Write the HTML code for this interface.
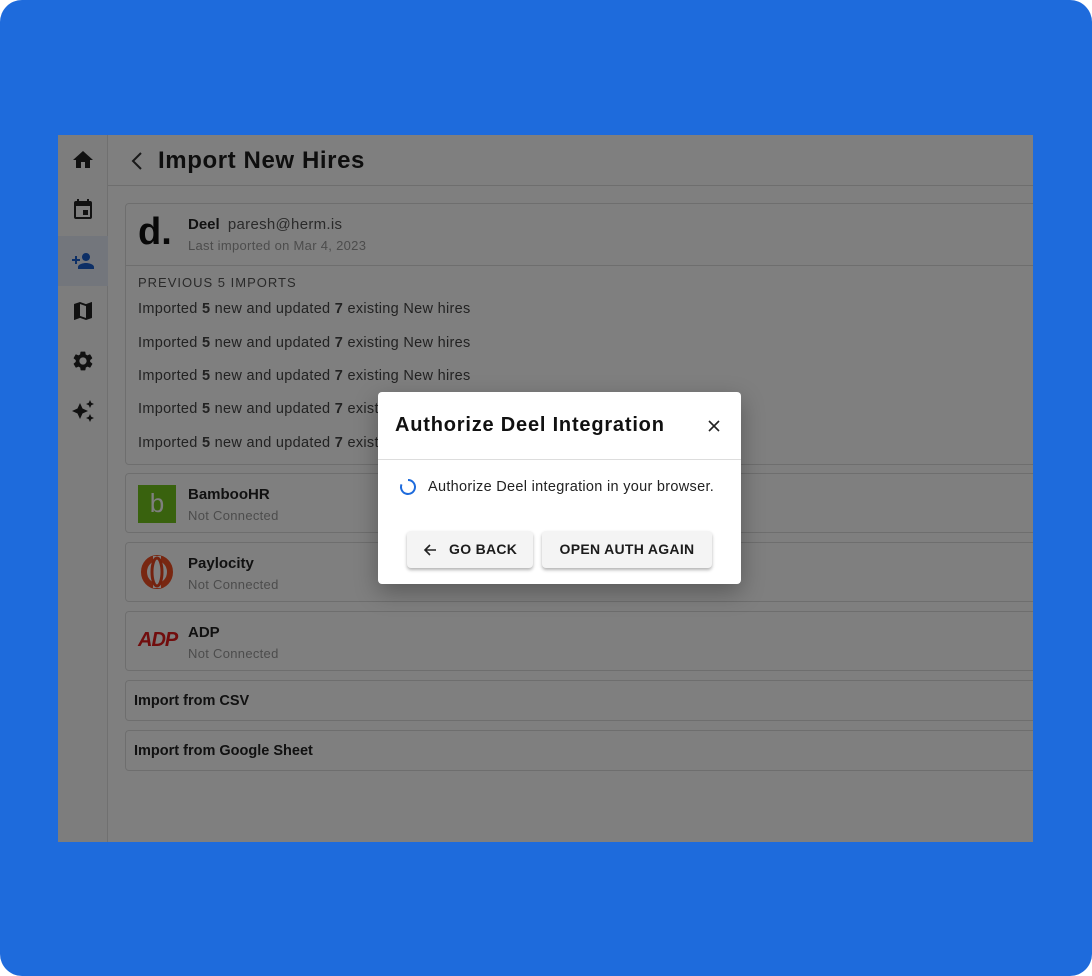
<!DOCTYPE html>
<html><head><style>
*{box-sizing:border-box;margin:0;padding:0}
body{width:1092px;height:976px;background:#fff;font-family:"Liberation Sans",sans-serif;position:relative;overflow:hidden}
.blue{position:absolute;left:0;top:0;width:1092px;height:976px;background:#1e6bdc;border-radius:22px}
.screen{position:absolute;left:58px;top:135px;width:975px;height:707px;background:#fff;overflow:hidden}
.side{position:absolute;left:0;top:0;width:50px;height:707px;background:#fafafa;border-right:1px solid #e0e0e0}
.ic{position:absolute;left:13px;width:24px;height:24px}
.active{position:absolute;left:0;top:101px;width:50px;height:50px;background:#e6edf9}
.hdr{position:absolute;left:50px;top:0;right:0;height:51px;border-bottom:1px solid #ddd}
.hdr h1{position:absolute;left:50px;top:12px;font-size:24px;font-weight:bold;color:#1c1c1c;letter-spacing:0.6px}
.card{position:absolute;left:67px;width:930px;border:1px solid #ddd;border-radius:4px;background:#fff}
.nm{position:absolute;left:62px;font-size:15px;font-weight:bold;color:#222}
.sub{position:absolute;left:62px;font-size:13px;color:#999;letter-spacing:0.3px}
.row{position:absolute;left:12px;font-size:14.5px;color:#444;letter-spacing:0.3px}
.ov{position:absolute;left:0;top:0;width:975px;height:707px;background:rgba(0,0,0,0.5)}
.modal{position:absolute;left:378px;top:392px;width:363px;height:192px;background:#fff;border-radius:4px;box-shadow:0 8px 24px rgba(0,0,0,.3)}
.btn{position:absolute;top:139px;height:37px;background:#f4f4f4;border-radius:4px;box-shadow:0 2px 3px rgba(0,0,0,.3);font-size:14px;font-weight:bold;color:#1c1c1c;line-height:37px;letter-spacing:0.3px}
</style></head><body>
<div class="blue"></div>
<div class="screen">
 <div class="side">
  <div class="active"></div>
  <svg class="ic" style="top:13px" viewBox="0 0 24 24"><path fill="#222" d="M10 20v-6h4v6h5v-8h3L12 3 2 12h3v8z"/></svg>
  <svg class="ic" style="top:63px" viewBox="0 0 24 24"><path fill="#222" d="M17 12h-5v5h5v-5zM16 1v2H8V1H6v2H5a2 2 0 0 0-2 2v14a2 2 0 0 0 2 2h14a2 2 0 0 0 2-2V5a2 2 0 0 0-2-2h-1V1h-2zm3 18H5V8h14v11z"/></svg>
  <svg class="ic" style="top:114px" viewBox="0 0 24 24"><path fill="#1a5fcc" d="M15 12c2.2 0 4-1.8 4-4s-1.8-4-4-4-4 1.8-4 4 1.8 4 4 4zm-9-2V7H4v3H1v2h3v3h2v-3h3v-2H6zm9 4c-2.7 0-8 1.3-8 4v2h16v-2c0-2.7-5.3-4-8-4z"/></svg>
  <svg class="ic" style="top:164px" viewBox="0 0 24 24"><path fill="#222" d="M20.5 3l-.2.1L15 5.1 9 3 3.4 4.9c-.2.1-.4.3-.4.5v15.1c0 .3.2.5.5.5l.2-.1L9 18.9l6 2.1 5.6-1.9c.2-.1.4-.3.4-.5V3.5c0-.3-.2-.5-.5-.5zM15 19l-6-2.1V5l6 2.1V19z"/></svg>
  <svg class="ic" style="top:214px" viewBox="0 0 24 24"><path fill="#222" d="M19.1 12.9c0-.3.1-.6.1-.9s0-.6-.1-.9l2-1.6c.2-.1.2-.4.1-.6l-1.9-3.3c-.1-.2-.4-.3-.6-.2l-2.4 1c-.5-.4-1-.7-1.6-.9l-.4-2.5c0-.2-.2-.4-.5-.4h-3.8c-.2 0-.4.2-.5.4l-.4 2.5c-.6.2-1.1.6-1.6.9l-2.4-1c-.2-.1-.5 0-.6.2L2.7 8.9c-.1.2-.1.5.1.6l2 1.6c0 .3-.1.6-.1.9s0 .6.1.9l-2 1.6c-.2.1-.2.4-.1.6l1.9 3.3c.1.2.4.3.6.2l2.4-1c.5.4 1 .7 1.6.9l.4 2.5c0 .2.2.4.5.4h3.8c.2 0 .4-.2.5-.4l.4-2.5c.6-.2 1.1-.6 1.6-.9l2.4 1c.2.1.5 0 .6-.2l1.9-3.3c.1-.2.1-.5-.1-.6l-2-1.6zM12 15.6c-2 0-3.6-1.6-3.6-3.6s1.6-3.6 3.6-3.6 3.6 1.6 3.6 3.6-1.6 3.6-3.6 3.6z"/></svg>
  <svg class="ic" style="top:264px" viewBox="0 0 24 24"><path fill="#222" d="M19 9l1.25-2.75L23 5l-2.75-1.25L19 1l-1.25 2.75L15 5l2.75 1.25zm-7.5.5L9 4 6.5 9.5 1 12l5.5 2.5L9 20l2.5-5.5L17 12zM19 15l-1.25 2.75L15 19l2.75 1.25L19 23l1.25-2.75L23 19l-2.75-1.25z"/></svg>
 </div>
 <div class="hdr">
  <svg style="position:absolute;left:18px;top:14px" width="24" height="24" viewBox="0 0 24 24"><path d="M15 4l-8 8 8 8" fill="none" stroke="#333" stroke-width="2"/></svg>
  <h1>Import New Hires</h1>
 </div>
 <div class="card" style="top:68px;height:262px">
  <div style="position:absolute;left:12px;top:12px;width:36px;height:36px;font-size:38px;font-weight:bold;line-height:32px;color:#111">d.</div>
  <div class="nm" style="top:12px">Deel <span style="font-weight:normal;color:#555;margin-left:4px;letter-spacing:0.3px">paresh@herm.is</span></div>
  <div class="sub" style="top:34px">Last imported on Mar 4, 2023</div>
  <div style="position:absolute;left:0;right:0;top:61px;border-top:1px solid #ddd"></div>
  <div class="row" style="top:71px;font-size:13px;letter-spacing:1px;color:#555">PREVIOUS 5 IMPORTS</div>
  <div class="row" style="top:97px">Imported <b>5</b> new and updated <b>7</b> existing New hires</div>
  <div class="row" style="top:131px">Imported <b>5</b> new and updated <b>7</b> existing New hires</div>
  <div class="row" style="top:164px">Imported <b>5</b> new and updated <b>7</b> existing New hires</div>
  <div class="row" style="top:197px">Imported <b>5</b> new and updated <b>7</b> existing New hires</div>
  <div class="row" style="top:231px">Imported <b>5</b> new and updated <b>7</b> existing New hires</div>
 </div>
 <div class="card" style="top:338px;height:60px">
  <div style="position:absolute;left:12px;top:11px;width:38px;height:38px;background:#73c41d;color:#fff;font-size:26px;text-align:center;line-height:36px">b</div>
  <div class="nm" style="top:12px">BambooHR</div><div class="sub" style="top:34px">Not Connected</div>
 </div>
 <div class="card" style="top:407px;height:60px">
  <svg style="position:absolute;left:14px;top:12px" width="34" height="34" viewBox="0 0 34 34"><ellipse cx="17" cy="17" rx="13" ry="14" fill="none" stroke="#f04e23" stroke-width="6"/><rect x="13" y="1" width="8" height="32" fill="#fff"/><ellipse cx="17" cy="17" rx="5" ry="14" fill="none" stroke="#e8441d" stroke-width="3"/></svg>
  <div class="nm" style="top:12px">Paylocity</div><div class="sub" style="top:34px">Not Connected</div>
 </div>
 <div class="card" style="top:476px;height:60px">
  <div style="position:absolute;left:12px;top:17px;font-size:20px;font-style:italic;font-weight:bold;color:#e21a1a;letter-spacing:-1px">ADP</div>
  <div class="nm" style="top:12px">ADP</div><div class="sub" style="top:34px">Not Connected</div>
 </div>
 <div class="card" style="top:545px;height:41px"><div class="nm" style="left:8px;top:12px;font-size:14.5px">Import from CSV</div></div>
 <div class="card" style="top:595px;height:41px"><div class="nm" style="left:8px;top:12px;font-size:14.5px">Import from Google Sheet</div></div>
 <div class="ov"></div>
</div>
<div class="modal">
 <div style="position:absolute;left:17px;top:22px;font-size:20px;font-weight:bold;color:#111;letter-spacing:0.8px">Authorize Deel Integration</div>
 <svg style="position:absolute;left:329px;top:27px" width="14" height="14" viewBox="0 0 14 14"><path d="M2 2l10 10M12 2L2 12" stroke="#222" stroke-width="1.6"/></svg>
 <div style="position:absolute;left:0;right:0;top:67px;border-top:1px solid #ddd"></div>
 <svg style="position:absolute;left:21px;top:86px" width="18" height="18" viewBox="0 0 18 18"><path d="M9 2a7 7 0 1 1-6.5 4.4" fill="none" stroke="#1e6bdc" stroke-width="2"/></svg>
 <div style="position:absolute;left:50px;top:87px;font-size:14.5px;color:#222;letter-spacing:0.3px">Authorize Deel integration in your browser.</div>
 <div class="btn" style="left:29px;width:126px"><svg style="position:absolute;left:16px;top:12px" width="14" height="14" viewBox="0 0 14 14"><path d="M13 7H2M7 2L2 7l5 5" fill="none" stroke="#222" stroke-width="1.6"/></svg><span style="position:absolute;left:42px">GO BACK</span></div>
 <div class="btn" style="left:164px;width:170px;text-align:center">OPEN AUTH AGAIN</div>
</div>
</body></html>
